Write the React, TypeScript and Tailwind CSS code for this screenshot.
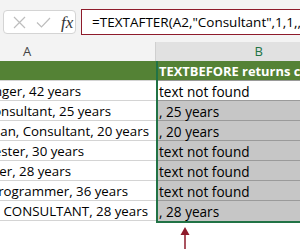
// column A is scrolled: only the tail of each entry shows, so each cell ends where the text ends
const rowsA: { text: string; end: string }[] = [
  { text: "nger, 42 years", end: "w-[81px]" },
  { text: "Consultant, 25 years", end: "w-[111px]" },
  { text: "man, Consultant, 20 years", end: "w-[149px]" },
  { text: "Tester, 30 years", end: "w-[84px]" },
  { text: "ter, 28 years", end: "w-[71px]" },
  { text: "Programmer, 36 years", end: "w-[128px]" },
  { text: ". CONSULTANT, 28 years", end: "w-[148px]" },
];

const rowsB = [
  "text not found",
  ", 25 years",
  ", 20 years",
  "text not found",
  "text not found",
  "text not found",
  ", 28 years",
];

const font = { fontFamily: "'Open Sans', sans-serif" };

export default function App() {
  return (
    <div className="w-[300px] h-[249px] bg-white overflow-hidden relative" style={font}>
      {/* formula bar */}
      <div className="h-[42px] bg-[#f3f3f3] flex items-start pt-[9px]">
        <div className="ml-[3px] mt-[1px] w-[73px] h-[24px] bg-white border border-[#d4d4d4] rounded-[4px] flex items-center shrink-0">
          <svg width="13" height="13" viewBox="0 0 13 13" className="ml-[9px]">
            <path d="M1 1 L12 12 M12 1 L1 12" stroke="#bdbdbd" strokeWidth="1.2" fill="none" />
          </svg>
          <svg width="15" height="11" viewBox="0 0 15 11" className="ml-[10px]">
            <path d="M1 5.5 L5.5 10 L14 1" stroke="#bdbdbd" strokeWidth="1.2" fill="none" />
          </svg>
          <span
            className="ml-[10px] text-[17px] italic text-[#333] leading-none"
            style={{ fontFamily: "'Liberation Serif', serif" }}
          >
            fx
          </span>
        </div>
        <div className="ml-[5px] h-[26px] flex-1 min-w-0 bg-white border border-[#8e1b2b] border-r-0 flex items-center pl-[10px] text-[13.5px] text-black whitespace-nowrap overflow-hidden">
          =TEXTAFTER(A2,"Consultant",1,1,,
        </div>
      </div>

      {/* column headers */}
      <div className="flex h-[19px] text-[13px] leading-[19px]">
        <div className="w-[156px] shrink-0 bg-[#f3f3f3] border-r border-[#cfcfcf] relative">
          <span className="absolute left-[23px] top-0 text-[#444]">A</span>
        </div>
        <div className="flex-1 bg-[#e1e1e1] flex justify-end pr-[37px] text-[#217346]">
          B
        </div>
      </div>

      {/* sheet */}
      <div className="flex text-black">
        <div className="w-[156px] shrink-0 text-[13.3px]">
          <div className="h-[20px] bg-[#548235] border-b border-[#d4d4d4]" />
          {rowsA.map((r, i) => (
            <div key={i} className="h-[20px] border-b border-[#d4d4d4] leading-[21px]">
              <div className={`${r.end} flex justify-end overflow-hidden whitespace-nowrap`}>
                <span className="shrink-0">{r.text}</span>
              </div>
            </div>
          ))}
        </div>
        <div className="flex-1 min-w-0 border-l-2 border-b-2 border-[#217346] text-[13.6px]">
          <div className="h-[20px] bg-[#548235] border-b border-[#9a9a9a] font-bold text-[12.9px] text-white whitespace-nowrap overflow-hidden leading-[20px] pl-[1px]">
            TEXTBEFORE returns custom text
          </div>
          {rowsB.map((t, i) => (
            <div
              key={i}
              className={`h-[20px] ${i === 6 ? "" : "border-b border-[#9a9a9a]"} ${
                i === 0 ? "bg-white" : "bg-[#c6c6c6]"
              } whitespace-nowrap leading-[21px] pl-[1px]`}
            >
              {t}
            </div>
          ))}
        </div>
      </div>

      {/* arrow */}
      <svg width="10" height="23" viewBox="0 0 10 23" className="absolute left-[180px] top-[227px]">
        <path d="M5 0 L9.5 8 L0.5 8 Z" fill="#8e1b2b" />
        <path d="M5 6 L5 23" stroke="#8e1b2b" strokeWidth="1.5" />
      </svg>
    </div>
  );
}
